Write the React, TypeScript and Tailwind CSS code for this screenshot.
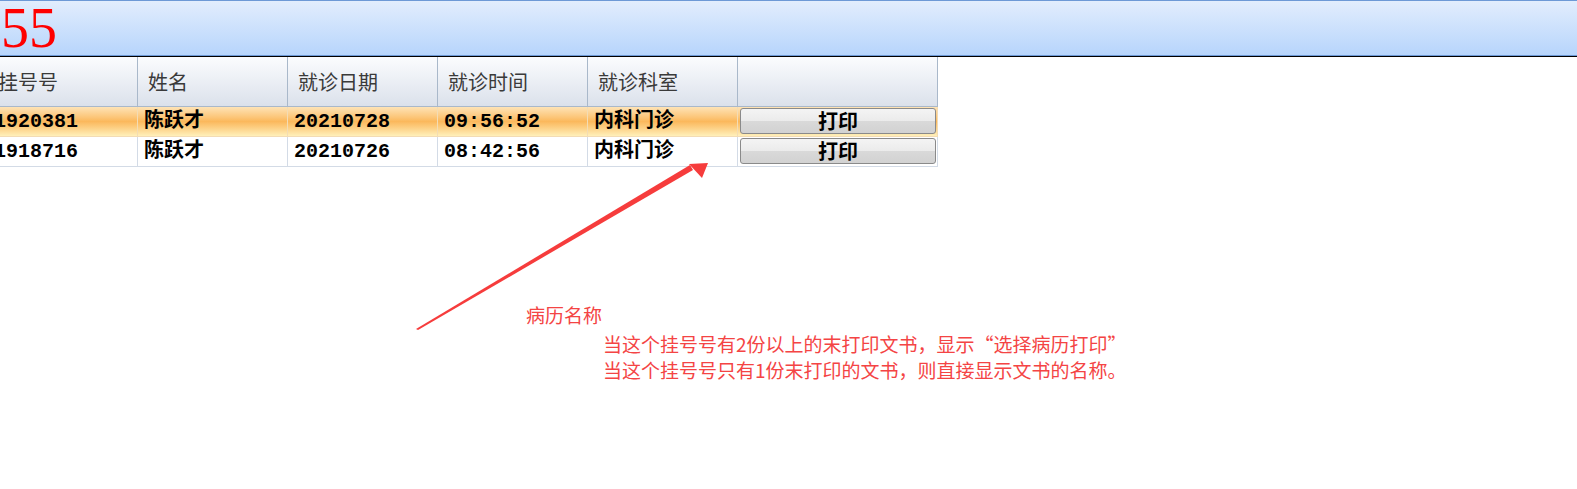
import React from 'react';

const COLS = ['挂号号', '姓名', '就诊日期', '就诊时间', '就诊科室', ''];

const ROWS = [
  { no: '1920381', name: '陈跃才', date: '20210728', time: '09:56:52', dept: '内科门诊', active: true },
  { no: '1918716', name: '陈跃才', date: '20210726', time: '08:42:56', dept: '内科门诊', active: false },
];

export default function App() {
  return (
    <div className="relative w-[1577px] h-[489px] overflow-hidden bg-white" style={{ fontFamily: '"Noto Sans CJK SC", "Noto Sans", sans-serif' }}>
      {/* Title bar */}
      <div className="h-[56px] flex items-center border-t border-b border-[#6d99d6] bg-[linear-gradient(to_bottom,#e2edfd,#b7d5fc)]">
        <span className="pl-[1px] text-[56px] leading-none text-[#ff0000]" style={{ fontFamily: '"Liberation Serif", serif' }}>55</span>
      </div>
      <div className="h-px bg-black" />

      {/* Grid */}
      <div className="ml-[-12px] w-[950px] grid grid-cols-[150px_150px_150px_150px_150px_200px]">
        {COLS.map((c, i) => (
          <div key={i} className="h-[50px] flex items-center pl-[10px] border-r border-b border-[#a9b8ca] bg-[linear-gradient(to_bottom,#fbfcfe,#dbe1eb)] text-[20px] text-[#3a3a3a]">
            {c}
          </div>
        ))}
        {ROWS.map(r => {
          const rowBg = r.active
            ? 'bg-[linear-gradient(to_bottom,#fee3b6_0%,#fcc679_35%,#fbb85c_50%,#fdd38a_75%,#fff0ba_100%)] border-[#f3dcb4]'
            : 'bg-white border-[#d3dbe6]';
          const cell = `h-[30px] flex items-center pl-[6px] border-r border-b ${rowBg} text-[20px] font-bold text-black`;
          return (
            <React.Fragment key={r.no}>
              {[r.no, r.name, r.date, r.time, r.dept].map((v, i) => (
                <div key={i} className={cell} style={{ fontFamily: '"Liberation Mono", "Noto Sans CJK SC", monospace' }}>
                  {v}
                </div>
              ))}
              <div className={`h-[30px] flex pl-[2px] pr-[1px] pt-px pb-[2px] border-r border-b ${rowBg}`}>
                <button className="flex-1 flex items-center justify-center rounded-[3px] border border-[#8a8a8a] bg-[linear-gradient(to_bottom,#f4f4f4_0%,#ebebeb_50%,#d9d9d9_51%,#d2d2d2_100%)] text-[20px] font-bold leading-none text-black">
                  打印
                </button>
              </div>
            </React.Fragment>
          );
        })}
      </div>

      {/* Annotation */}
      <svg className="absolute left-0 top-0" width="1577" height="489">
        <polygon points="416,329 418,330 693,170 690,165" fill="#f63c3c" />
        <polygon points="708,163 689,164 702,178" fill="#f63c3c" />
      </svg>
      <div className="absolute left-[526px] top-[302px] text-[19px] leading-[26px] text-[#f44444]">病历名称</div>
      <div className="absolute left-[603px] top-[331px] text-[19px] leading-[26px] text-[#f44444]">
        <div>当这个挂号号有2份以上的末打印文书，显示“选择病历打印”</div>
        <div>当这个挂号号只有1份末打印的文书，则直接显示文书的名称。</div>
      </div>
    </div>
  );
}
